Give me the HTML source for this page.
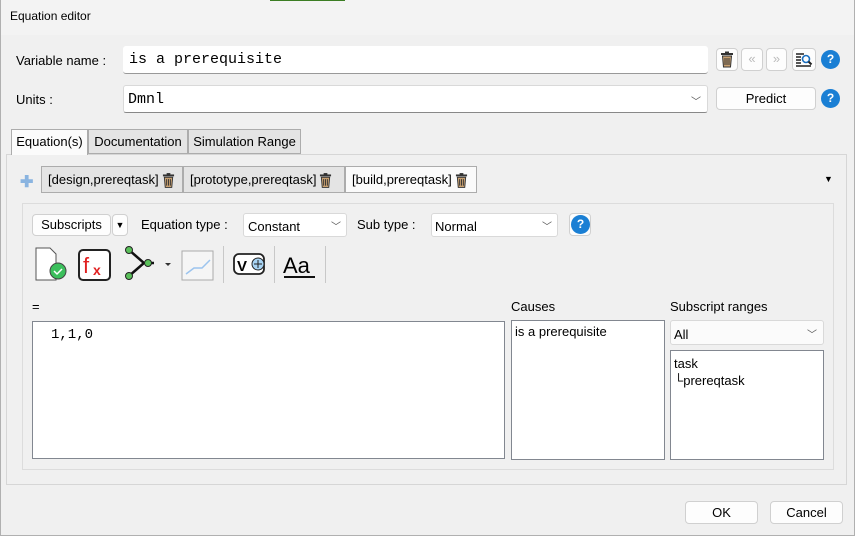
<!DOCTYPE html>
<html><head><style>
*{box-sizing:border-box}
body{margin:0;width:855px;height:536px;background:#f0f0f0;font-family:"Liberation Sans",sans-serif;font-size:13px;color:#000;position:relative;overflow:hidden}
.a{position:absolute}
.inp{position:absolute;background:#fff;border:1px solid #d9d9d9;border-bottom:1px solid #888;border-radius:3px}
.btn{position:absolute;background:#fdfdfd;border:1px solid #d0d0d0;border-radius:4px;text-align:center}
.mono{font-family:"Liberation Mono",monospace;font-size:15px}
.q{position:absolute;width:19px;height:19px;border-radius:50%;background:#1a7fd4;color:#fff;font-weight:bold;font-size:12px;text-align:center;line-height:19px}
.tab{position:absolute;border:1px solid #acacac;background:#e4e4e4;text-align:center;line-height:24px}
.chev{position:absolute;font-size:10px;color:#555}
.box{position:absolute;background:#fff;border:1px solid #828790}
.sep{position:absolute;width:1px;background:#c8c8c8;top:246px;height:37px}
.tr{display:inline-block;vertical-align:middle;margin-left:3px}
</style></head><body>
<div class="a" style="left:0;top:0;width:855px;height:536px;border:1px solid #b0b0b0;border-top:none"></div>
<div class="a" style="left:1px;top:0;width:853px;height:35px;background:#f3f3f3"></div>
<div class="a" style="left:270px;top:0;width:75px;height:1px;background:#3b7d23"></div>
<div class="a" style="left:10px;top:9px;font-size:12px">Equation editor</div>

<div class="a" style="left:16px;top:53px">Variable name :</div>
<div class="inp" style="left:123px;top:46px;width:585px;height:28px;border:none;border-bottom:1px solid #999"><span class="mono a" style="left:6px;top:5px">is a prerequisite</span></div>
<div class="btn" style="left:716px;top:48px;width:22px;height:23px"><svg width="14" height="17" viewBox="0 0 14 17" style="margin-top:2px"><rect x="1" y="2" width="12" height="2" fill="#333"/><rect x="5" y="0.5" width="4" height="2" fill="#333"/><path d="M2.5 5h9l-1 11h-7z" fill="#c8a070" stroke="#333"/><path d="M5 7v7M7 7v7M9 7v7" stroke="#333"/></svg></div>
<div class="btn" style="left:741px;top:48px;width:22px;height:23px;color:#bbb;line-height:20px">«</div>
<div class="btn" style="left:766px;top:48px;width:21px;height:23px;color:#bbb;line-height:20px">»</div>
<div class="btn" style="left:792px;top:48px;width:24px;height:23px"><svg width="18" height="16" viewBox="0 0 18 16" style="margin-top:3px"><path d="M1 2h8M1 5h5M1 8h5M1 11h5M1 14h15" stroke="#222" stroke-width="1.4"/><circle cx="11" cy="7" r="3.5" fill="none" stroke="#1a6fc0" stroke-width="1.6"/><path d="M13.5 9.5l3 3" stroke="#222" stroke-width="2"/></svg></div>
<div class="q" style="left:821px;top:50px">?</div>

<div class="a" style="left:16px;top:92px">Units :</div>
<div class="inp" style="left:123px;top:85px;width:585px;height:28px"><span class="mono a" style="left:4px;top:5px">Dmnl</span><span class="chev" style="right:6px;top:7px">﹀</span></div>
<div class="btn" style="left:716px;top:87px;width:100px;height:23px;line-height:21px">Predict</div>
<div class="q" style="left:821px;top:89px">?</div>

<div class="a" style="left:6px;top:154px;width:841px;height:331px;border:1px solid #d6d6d6;background:#f0f0f0"></div>
<div class="tab" style="left:11px;top:129px;width:77px;height:26px;background:#fbfbfb;border-bottom:none">Equation(s)</div>
<div class="tab" style="left:88px;top:129px;width:100px;height:25px">Documentation</div>
<div class="tab" style="left:188px;top:129px;width:113px;height:25px">Simulation Range</div>

<div class="a" style="left:20px;top:172px;color:#8ab4e0;font-weight:bold;font-size:16px">✚</div>
<div class="tab" style="left:41px;top:166px;width:142px;height:27px;line-height:26px;text-align:left;padding-left:6px">[design,prereqtask]<svg class="tr" width="13" height="17" viewBox="0 0 14 17"><rect x="1" y="2" width="12" height="2" fill="#333"/><rect x="5" y="0.5" width="4" height="2" fill="#333"/><path d="M2.5 5h9l-1 11h-7z" fill="#c8a070" stroke="#333"/><path d="M5 7v7M7 7v7M9 7v7" stroke="#333"/></svg></div>
<div class="tab" style="left:183px;top:166px;width:162px;height:27px;line-height:26px;text-align:left;padding-left:6px">[prototype,prereqtask]<svg class="tr" width="13" height="17" viewBox="0 0 14 17"><rect x="1" y="2" width="12" height="2" fill="#333"/><rect x="5" y="0.5" width="4" height="2" fill="#333"/><path d="M2.5 5h9l-1 11h-7z" fill="#c8a070" stroke="#333"/><path d="M5 7v7M7 7v7M9 7v7" stroke="#333"/></svg></div>
<div class="tab" style="left:345px;top:166px;width:132px;height:27px;line-height:26px;text-align:left;padding-left:6px;background:#fafafa">[build,prereqtask]<svg class="tr" width="13" height="17" viewBox="0 0 14 17"><rect x="1" y="2" width="12" height="2" fill="#333"/><rect x="5" y="0.5" width="4" height="2" fill="#333"/><path d="M2.5 5h9l-1 11h-7z" fill="#c8a070" stroke="#333"/><path d="M5 7v7M7 7v7M9 7v7" stroke="#333"/></svg></div>
<div class="a" style="left:824px;top:174px;font-size:9px">▼</div>

<div class="a" style="left:22px;top:203px;width:812px;height:267px;border:1px solid #dcdcdc"></div>
<div class="btn" style="left:32px;top:214px;width:79px;height:22px;line-height:20px">Subscripts</div>
<div class="btn" style="left:112px;top:214px;width:16px;height:22px;font-size:9px;line-height:20px">▼</div>
<div class="a" style="left:141px;top:217px">Equation type :</div>
<div class="inp" style="left:243px;top:213px;width:104px;height:24px;border-bottom-color:#d9d9d9"><span class="a" style="left:4px;top:5px">Constant</span><span class="chev" style="right:5px;top:4px">﹀</span></div>
<div class="a" style="left:357px;top:217px">Sub type :</div>
<div class="inp" style="left:431px;top:213px;width:127px;height:24px;border-bottom-color:#d9d9d9"><span class="a" style="left:3px;top:5px">Normal</span><span class="chev" style="right:5px;top:4px">﹀</span></div>
<div class="btn" style="left:569px;top:213px;width:22px;height:23px"></div>
<div class="q" style="left:571px;top:215px">?</div>

<svg class="a" style="left:30px;top:244px" width="320" height="42">
<path d="M6 4h14l6 6v26H6z" fill="#fff" stroke="#555"/>
<circle cx="28" cy="27" r="8" fill="#3bbf5c" stroke="#444"/><path d="M24 27l3 3 5-5" stroke="#fff" fill="none" stroke-width="1.5"/>
<rect x="49" y="6" width="31" height="30" rx="4" fill="#fff" stroke="#222" stroke-width="2"/>
<text x="53" y="29" fill="#e02020" font-size="22" font-family="Liberation Sans">f</text><text x="63" y="31" fill="#e02020" font-size="14" font-weight="bold">x</text>
<path d="M99 6l15 13-15 13M114 19h10" stroke="#111" stroke-width="2.5" fill="none"/>
<circle cx="99" cy="6" r="3.5" fill="#5ac05a" stroke="#222"/><circle cx="99" cy="32" r="3.5" fill="#5ac05a" stroke="#222"/><circle cx="118" cy="19" r="3.5" fill="#5ac05a" stroke="#222"/>
<path d="M135 19h6l-3 3z" fill="#333"/>
<rect x="152" y="7" width="31" height="29" fill="#f5f5f5" stroke="#aaa"/>
<path d="M156 30l8-6 8 0 8-8" stroke="#9cc4ee" stroke-width="1.5" fill="none"/>
<rect x="204" y="10" width="30" height="20" rx="5" fill="#fff" stroke="#222" stroke-width="1.8"/>
<text x="207" y="27" font-size="15" font-weight="bold">V</text>
<circle cx="228" cy="20" r="6" fill="#a8d4f4" stroke="#222"/><path d="M224 20h8M228 16v8" stroke="#222"/>
<text x="253" y="29" font-size="22">Aa</text><rect x="254" y="32" width="31" height="2" fill="#111"/>
</svg>
<div class="sep" style="left:223px"></div><div class="sep" style="left:274px"></div><div class="sep" style="left:325px"></div>

<div class="a" style="left:32px;top:299px">=</div>
<div class="a" style="left:511px;top:299px">Causes</div>
<div class="a" style="left:670px;top:299px">Subscript ranges</div>
<div class="box" style="left:32px;top:321px;width:473px;height:138px"><span class="mono a" style="left:18px;top:5px;font-size:14px">1,1,0</span></div>
<div class="box" style="left:511px;top:320px;width:154px;height:140px"><span class="a" style="left:3px;top:3px">is a prerequisite</span></div>
<div class="inp" style="left:670px;top:320px;width:154px;height:25px;background:#fbfbfb;border-bottom-color:#d9d9d9"><span class="a" style="left:3px;top:6px">All</span><span class="chev" style="right:6px;top:5px">﹀</span></div>
<div class="box" style="left:670px;top:350px;width:154px;height:110px"><div class="a" style="left:3px;top:4px;line-height:17px">task<br>└prereqtask</div></div>

<div class="btn" style="left:685px;top:501px;width:73px;height:23px;line-height:21px">OK</div>
<div class="btn" style="left:770px;top:501px;width:73px;height:23px;line-height:21px">Cancel</div>
</body></html>
